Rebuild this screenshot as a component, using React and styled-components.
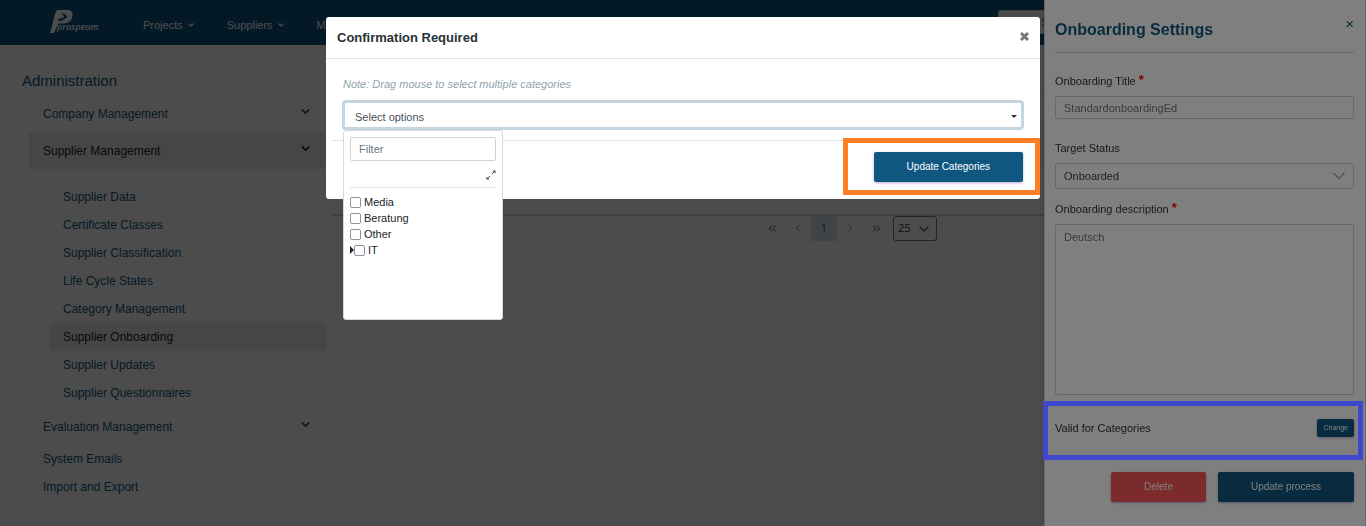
import React from "react";
import styled, { createGlobalStyle, ThemeProvider } from "styled-components";
import {
  ChevronDown,
  ChevronLeft,
  ChevronRight,
  ChevronsLeft,
  ChevronsRight,
} from "lucide-react";

const theme = {
  primary: "#105780",
  header: "#0a5680",
  danger: "#f75656",
  text: "#333",
  muted: "#6c757d",
  line: "#dee2e6",
  border: "#ced4da",
};

const GlobalStyle = createGlobalStyle`
  * {
    box-sizing: border-box;
  }

  body {
    margin: 0;
    font-family: "Liberation Sans", Arial, sans-serif;
    font-size: 11px;
    line-height: 16px;
    background: #4c4c4c;
  }

  button,
  input,
  select,
  textarea {
    font: inherit;
  }
`;

const Page = styled.div`
  min-height: 100vh;
  background: #fff;
`;

const TopBar = styled.header`
  display: flex;
  align-items: center;
  height: 45px;
  padding-left: 49px;
  background: ${(props) => props.theme.header};
`;

const Logo = styled.svg`
  width: 54px;
  height: 28px;
  fill: #fff;

  text {
    font: italic 600 9px "Open Sans", sans-serif;
  }
`;

const MainNav = styled.nav`
  display: flex;
  flex: 1;
  gap: 32px;
  padding: 5px 0 0 40px;

  a {
    display: flex;
    align-items: center;
    gap: 4px;
    color: #fff;
    text-decoration: none;
  }
`;

const Search = styled.input`
  width: 340px;
  height: 24px;
  margin: 0 28px 2px 0;
  padding: 0 42px;
  border: 1px solid ${(props) => props.theme.border};
  border-radius: 3px;
  background: #fff;
`;

const Columns = styled.div`
  display: flex;
`;

const Sidebar = styled.aside`
  flex: 0 0 326px;
  padding: 26px 0 24px;

  h1 {
    margin: 0 0 4px 22px;
    color: ${(props) => props.theme.primary};
    font-size: 15px;
    font-weight: 400;
    line-height: 20px;
  }
`;

const Menu = styled.ul`
  margin: 0;
  padding: 0 0 0 29px;
  list-style: none;
`;

const SubMenu = styled.ul`
  margin: 0;
  padding: 14px 0 1px 20px;
  list-style: none;
`;

const MenuLink = styled.a`
  display: flex;
  align-items: center;
  justify-content: space-between;
  height: ${(props) => (props.$group ? "37px" : "28px")};
  padding: 0 14px;
  border-radius: 3px;
  font-size: 12px;
  text-decoration: none;
  color: ${(props) => (props.$active ? "#222" : props.theme.primary)};
  background: ${(props) => (props.$active ? "#e9ecef" : "transparent")};

  svg {
    margin-bottom: 4px;
  }
`;

const Main = styled.main`
  flex: 1;
  min-width: 0;
  padding: 48px 0 0 4px;
`;

const Processes = styled.table`
  width: 100%;
  border-collapse: collapse;
  border-bottom: 2px solid #c8d4df;

  th {
    height: 29px;
    border: 1px solid ${(props) => props.theme.border};
  }

  td {
    height: 46px;
    text-align: center;
  }

  td:last-child {
    padding-left: 94px;
  }

  tbody tr:first-child {
    background: #e9ecef;
  }
`;

const Badge = styled.span`
  display: inline-block;
  width: 19px;
  height: 19px;
  border-radius: 3px;
  background: #8fc39a;
`;

const Paginator = styled.div`
  display: flex;
  justify-content: center;
  align-items: flex-start;

  label {
    display: flex;
    position: relative;
    margin-left: 4px;
  }

  label svg {
    position: absolute;
    right: 5px;
    top: 5px;
    pointer-events: none;
  }
`;

const PageButton = styled.button`
  display: flex;
  align-items: center;
  justify-content: center;
  width: 26px;
  height: 25px;
  padding: 0;
  border: 0;
  font-family: "Open Sans", sans-serif;
  color: ${(props) => (props.$current ? props.theme.primary : "#888")};
  background: ${(props) => (props.$current ? "#d5e3ee" : "transparent")};
`;

const PageSize = styled.select`
  appearance: none;
  width: 44px;
  height: 25px;
  padding: 0 4px;
  border: 1px solid #777;
  border-radius: 3px;
  background: #fff;
  color: #333;
  font-family: "Open Sans", sans-serif;
`;

const DrawerShade = styled.div`
  position: fixed;
  inset: 0;
  background: rgba(0, 0, 0, 0.4);
`;

const ModalShade = styled.div`
  position: fixed;
  inset: 0;
  z-index: 10;
  background: rgba(0, 0, 0, 0.5);
`;

const Drawer = styled.section`
  position: absolute;
  top: 0;
  right: 0;
  width: 322px;
  min-height: 100vh;
  padding: 0 11px 23px 10px;
  border: solid #d2d2d2;
  border-width: 0 1px;
  background: #fff;
  box-shadow: 0 0 6px rgba(0, 0, 0, 0.2);
  color: ${(props) => props.theme.text};
`;

const DrawerHeader = styled.header`
  display: flex;
  justify-content: space-between;
  align-items: flex-start;
  height: 53px;
  margin-bottom: 19px;
  padding-top: 16px;
  border-bottom: 1px solid ${(props) => props.theme.border};
  color: ${(props) => props.theme.primary};

  h2 {
    margin: 2px 0 0;
    font-size: 16px;
    line-height: 24px;
  }

  button {
    padding: 0;
    border: 0;
    background: none;
    color: inherit;
    font-size: 15px;
    line-height: 16px;
  }
`;

const Field = styled.div`
  display: flex;
  flex-direction: column;
  position: relative;
  margin-bottom: ${(props) => props.$gap};

  label {
    margin-bottom: 6px;
    line-height: 18px;
  }

  sup {
    color: #f00;
    font-size: 13px;
    font-weight: 700;
    line-height: 0;
    vertical-align: 1px;
  }

  svg {
    position: absolute;
    right: 5px;
    bottom: 3px;
    color: #aaa;
    pointer-events: none;
  }

  input,
  select,
  textarea {
    appearance: none;
    width: 100%;
    margin: 0;
    padding: 0 8px;
    border: 1px solid #cdd0d4;
    border-radius: 2px;
    background: #fff;
    color: ${(props) => props.theme.muted};
  }

  input {
    height: 23px;
  }

  select {
    height: 26px;
    color: #444;
  }

  textarea {
    height: 171px;
    padding: 4px 8px;
    resize: none;
  }
`;

/* frame drawn over the page, above both shades */
const Callout = styled.span`
  position: absolute;
  inset: ${(props) => props.$inset};
  z-index: 30;
  border: 5px solid ${(props) => props.$color};
  pointer-events: none;
`;

const CategoriesRow = styled.div`
  display: flex;
  align-items: center;
  justify-content: space-between;
  position: relative;
  height: 59px;
  margin: 6px 0 12px;
  padding-bottom: 5px;
`;

const Actions = styled.div`
  display: flex;
  justify-content: flex-end;
  gap: 12px;
`;

const Button = styled.button`
  height: ${(props) => (props.$small ? "18px" : "30px")};
  padding: ${(props) => (props.$small ? "0 6px" : "0 33px")};
  border: 0;
  border-radius: 2px;
  background: ${(props) =>
    props.$danger ? props.theme.danger : props.theme.primary};
  box-shadow: 0 1px 3px rgba(80, 40, 160, 0.4);
  color: #fff;
  font-size: ${(props) => (props.$small ? "7px" : "10px")};
  line-height: 10px;
`;

const Dialog = styled.div`
  position: absolute;
  top: 17px;
  left: 0;
  right: 0;
  z-index: 20;
  width: 100%;
  max-width: 714px;
  margin: 0 auto;
  border-radius: 3px;
  background: #fff;
`;

const DialogHeader = styled.header`
  display: flex;
  align-items: center;
  justify-content: space-between;
  height: 42px;
  padding: 0 11px;
  border-bottom: 1px solid ${(props) => props.theme.line};

  h2 {
    margin: 0;
    color: #263238;
    font-size: 13px;
  }

  button {
    display: flex;
    padding: 0 0 3px;
    border: 0;
    background: none;
    color: #777;
  }
`;

const DialogBody = styled.div`
  padding: 17px 16px 10px;

  p {
    margin: 0 0 7px 1px;
    color: #90a4ae;
    font-style: italic;
    line-height: 17px;
  }
`;

const Picker = styled.div`
  position: relative;

  > select {
    display: block;
    appearance: none;
    width: 100%;
    height: 30px;
    padding: 4px 11px 0;
    border: 3px solid #c5d5df;
    border-radius: 4px;
    padding: 4px 10px 0;
    background: #fff;
    color: #495057;
  }
`;

const Caret = styled.span`
  position: absolute;
  top: 15px;
  right: 7px;
  border: solid transparent;
  border-width: 3px 3px 0;
  border-top-color: #333;
  pointer-events: none;
`;

const Options = styled.div`
  position: absolute;
  top: 30px;
  left: 1px;
  z-index: 1;
  width: 160px;
  height: 190px;
  padding: 6px;
  border: 1px solid #d5d9dd;
  border-radius: 3px;
  background: #fff;
  color: #212529;
`;

const Filter = styled.input`
  display: block;
  width: 100%;
  height: 24px;
  padding: 0 8px;
  border: 1px solid ${(props) => props.theme.border};
  border-radius: 2px;

  &::placeholder {
    color: ${(props) => props.theme.muted};
    opacity: 1;
  }
`;

const Tools = styled.div`
  display: flex;
  justify-content: flex-end;
  height: 27px;
  margin-bottom: 6px;
  padding-top: 9px;
  border-bottom: 1px solid ${(props) => props.theme.line};

  button {
    display: flex;
    padding: 0;
    border: 0;
    background: none;
  }
`;

const Option = styled.label`
  display: flex;
  align-items: center;
  gap: 3px;
  height: 16px;

  input {
    appearance: none;
    width: 11px;
    height: 11px;
    margin: 0;
    border: 1px solid #8f8f9d;
    border-radius: 2px;
    background: #fff;
  }
`;

const Branch = styled.div`
  display: flex;
  align-items: center;

  &::before {
    content: "";
    border: solid transparent;
    border-width: 4px 0 4px 4px;
    border-left-color: #212529;
  }
`;

const DialogFooter = styled.footer`
  display: flex;
  justify-content: flex-end;
  margin: 0 6px;
  padding: 11px 11px 17px;
  border-top: 1px solid ${(props) => props.theme.line};

  > div {
    position: relative;
  }
`;

const menu = [
  { label: "Company Management", group: true },
  {
    label: "Supplier Management",
    group: true,
    active: true,
    children: [
      "Supplier Data",
      "Certificate Classes",
      "Supplier Classification",
      "Life Cycle States",
      "Category Management",
      "Supplier Onboarding",
      "Supplier Updates",
      "Supplier Questionnaires",
    ],
  },
  { label: "Evaluation Management", group: true },
  { label: "System Emails" },
  { label: "Import and Export" },
];

const ProspeumLogo = () => (
  <Logo viewBox="0 0 54 28" role="img" aria-label="Prospeum">
    <path
      fillRule="evenodd"
      d="M8 1H18Q24 1 23.5 6Q23 14 15 14.5H9.5L5 24H1L5.5 7Q6 4 8 1ZM11 4.5L14 5.5L15 8L12.5 9.5L10 9.5L9 12L12.5 12L18.5 8L15.5 4.5Z"
    />
    <text x="8" y="21">
      prospeum
    </text>
  </Logo>
);

const CloseIcon = () => (
  <svg width="9" height="9" viewBox="0 0 9 9" stroke="#777" strokeWidth="3">
    <path d="M1 1L8 8M8 1L1 8" />
  </svg>
);

const ExpandIcon = () => (
  <svg width="10" height="10" viewBox="0 0 10 10" stroke="#444" fill="#444">
    <path d="M6 4L9 1M4 6L1 9" fill="none" />
    <path d="M6.5 0.5H9.5V3.5ZM3.5 9.5H0.5V6.5Z" strokeWidth="0" />
  </svg>
);

const SideMenu = () => (
  <Sidebar>
    <h1>Administration</h1>
    <Menu>
      {menu.map(({ label, group, active, children }) => (
        <li key={label}>
          <MenuLink href="#" $group={group} $active={active}>
            {label}
            {group && <ChevronDown size={13} strokeWidth={3} />}
          </MenuLink>
          {children && (
            <SubMenu>
              {children.map((child) => (
                <li key={child}>
                  <MenuLink href="#" $active={child === "Supplier Onboarding"}>
                    {child}
                  </MenuLink>
                </li>
              ))}
            </SubMenu>
          )}
        </li>
      ))}
    </Menu>
  </Sidebar>
);

const ProcessList = () => (
  <Main>
    <Processes>
      <thead>
        <tr>
          <th />
        </tr>
      </thead>
      <tbody>
        <tr>
          <td />
        </tr>
        <tr>
          <td>
            <Badge />
          </td>
        </tr>
      </tbody>
    </Processes>
    <Paginator>
      <PageButton aria-label="First page">
        <ChevronsLeft size={13} />
      </PageButton>
      <PageButton aria-label="Previous page">
        <ChevronLeft size={12} />
      </PageButton>
      <PageButton $current>1</PageButton>
      <PageButton aria-label="Next page">
        <ChevronRight size={12} />
      </PageButton>
      <PageButton aria-label="Last page">
        <ChevronsRight size={13} />
      </PageButton>
      <label>
        <PageSize aria-label="Rows per page">
          <option>25</option>
        </PageSize>
        <ChevronDown size={16} color="#555" />
      </label>
    </Paginator>
  </Main>
);

const SettingsDrawer = () => (
  <Drawer>
    <DrawerHeader>
      <h2>Onboarding Settings</h2>
      <button aria-label="Close settings">×</button>
    </DrawerHeader>
    <Field $gap="20px">
      <label htmlFor="title">
        Onboarding Title <sup>*</sup>
      </label>
      <input id="title" defaultValue="StandardonboardingEd" />
    </Field>
    <Field $gap="11px">
      <label htmlFor="status">Target Status</label>
      <select id="status">
        <option>Onboarded</option>
      </select>
      <ChevronDown size={20} strokeWidth={2} />
    </Field>
    <Field $gap="0">
      <label htmlFor="description">
        Onboarding description <sup>*</sup>
      </label>
      <textarea id="description" defaultValue="Deutsch" />
    </Field>
    <CategoriesRow>
      Valid for Categories
      <Button $small>Change</Button>
      <Callout $inset="0 -9px 0 -12px" $color="#3f48cc" />
    </CategoriesRow>
    <Actions>
      <Button $danger>Delete</Button>
      <Button>Update process</Button>
    </Actions>
  </Drawer>
);

const CategoryDialog = () => (
  <Dialog role="dialog" aria-labelledby="dialog-title">
    <DialogHeader>
      <h2 id="dialog-title">Confirmation Required</h2>
      <button aria-label="Close">
        <CloseIcon />
      </button>
    </DialogHeader>
    <DialogBody>
      <p>Note: Drag mouse to select multiple categories</p>
      <Picker>
        <select aria-label="Categories">
          <option>Select options</option>
        </select>
        <Caret />
        <Options>
          <Filter placeholder="Filter" aria-label="Filter categories" />
          <Tools>
            <button aria-label="Expand all">
              <ExpandIcon />
            </button>
          </Tools>
          {["Media", "Beratung", "Other"].map((name) => (
            <Option key={name}>
              <input type="checkbox" />
              {name}
            </Option>
          ))}
          <Branch>
            <Option>
              <input type="checkbox" />
              IT
            </Option>
          </Branch>
        </Options>
      </Picker>
    </DialogBody>
    <DialogFooter>
      <div>
        <Button>Update Categories</Button>
        <Callout $inset="-14px -17px -13px -31px" $color="#ff7f27" />
      </div>
    </DialogFooter>
  </Dialog>
);

export default () => (
  <ThemeProvider theme={theme}>
    <GlobalStyle />
    <Page>
      <TopBar>
        <ProspeumLogo />
        <MainNav>
          {["Projects", "Suppliers", "Messages"].map((item) => (
            <a href="#" key={item}>
              {item} <ChevronDown size={8} strokeWidth={4} />
            </a>
          ))}
        </MainNav>
        <Search placeholder="Search" aria-label="Search" />
      </TopBar>
      <Columns>
        <SideMenu />
        <ProcessList />
      </Columns>
    </Page>
    <DrawerShade />
    <SettingsDrawer />
    <ModalShade />
    <CategoryDialog />
  </ThemeProvider>
);
